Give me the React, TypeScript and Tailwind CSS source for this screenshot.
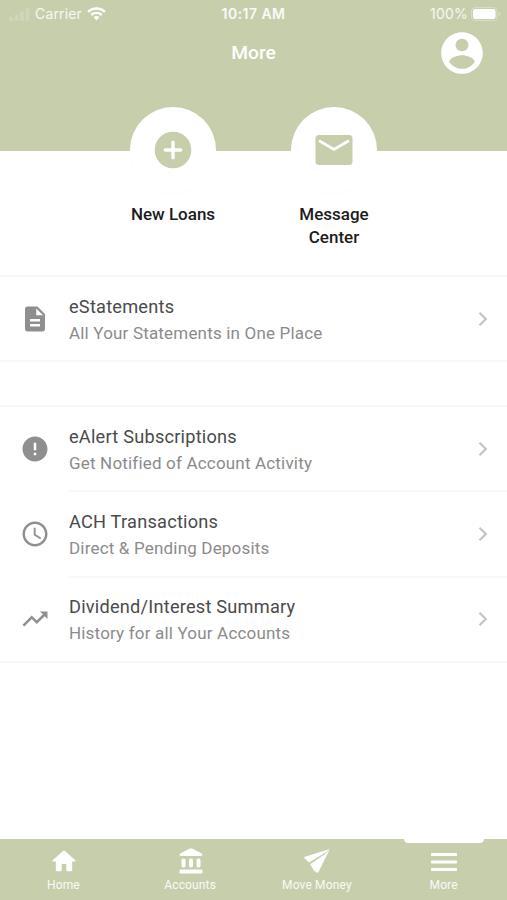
import type { ReactNode } from "react";

type MenuItem = {
  title: string;
  description: string;
  icon: string;
};

type IconProps = {
  path: string;
  className: string;
};

const documentPath =
  "M14 2H6c-1.1 0-1.99.9-1.99 2L4 20c0 1.1.89 2 1.99 2H18c1.1 0 2-.9 2-2V8l-6-6zm2 16H8v-2h8v2zm0-4H8v-2h8v2zm-3-5V3.5L18.5 9H13z";
const alertPath =
  "M12 2C6.48 2 2 6.48 2 12s4.48 10 10 10 10-4.48 10-10S17.52 2 12 2zm1 15h-2v-2h2v2zm0-4h-2V7h2v6z";
const clockPath =
  "M11.99 2C6.47 2 2 6.48 2 12s4.47 10 9.99 10C17.52 22 22 17.52 22 12S17.52 2 11.99 2zM12 20c-4.42 0-8-3.58-8-8s3.58-8 8-8 8 3.58 8 8-3.58 8-8 8zm.5-13H11v6l5.25 3.15.75-1.23-4.5-2.67z";
const trendPath =
  "M16 6l2.29 2.29-4.88 4.88-4-4L2 16.59 3.41 18l6-6 4 4 6.3-6.29L22 12V6z";
const accountPath =
  "M12 2C6.48 2 2 6.48 2 12s4.48 10 10 10 10-4.48 10-10S17.52 2 12 2zm0 3.1c1.66 0 3.1 1.34 3.1 3s-1.44 3-3.1 3-3.1-1.34-3.1-3 1.44-3 3.1-3zm0 14.5c-2.5 0-4.71-1.28-6.1-3.32.03-1.99 4.1-3.18 6.1-3.18 1.99 0 6.07 1.19 6.1 3.18-1.39 2.04-3.6 3.32-6.1 3.32z";
const homePath =
  "M10 20v-5.5h4V20c0 .5.3.8.8.8h3.400c.5 0 .8-.3.8-.8v-7.500h2.200c.8 0 1-.7.500-1.200L12.600 3.300c-.4-.3-.8-.3-1.200 0L2.300 11.300c-.5.5-.3 1.200.5 1.200H5V20c0 .5.3.8.8.8h3.400c.5 0 .8-.3.8-.8z";

const statementItems: MenuItem[] = [
  {
    title: "eStatements",
    description: "All Your Statements in One Place",
    icon: documentPath,
  },
];

const activityItems: MenuItem[] = [
  {
    title: "eAlert Subscriptions",
    description: "Get Notified of Account Activity",
    icon: alertPath,
  },
  {
    title: "ACH Transactions",
    description: "Direct & Pending Deposits",
    icon: clockPath,
  },
  {
    title: "Dividend/Interest Summary",
    description: "History for all Your Accounts",
    icon: trendPath,
  },
];

function Icon({ path, className }: IconProps) {
  return (
    <svg viewBox="0 0 24 24" fill="currentColor" className={className}>
      <path d={path} />
    </svg>
  );
}

function StatusBar() {
  return (
    <div className="grid h-7 grid-cols-3 items-center font-['Inter',sans-serif] text-[14px] leading-none">
      <div className="flex items-center pl-[9px]">
        <svg viewBox="0 0 22 13" className="h-[13px] w-[22px] fill-white/15">
          <rect x="0" y="9" width="4" height="4" rx="1" />
          <rect x="5.5" y="6.5" width="4" height="6.5" rx="1" />
          <rect x="11" y="3.5" width="4" height="9.5" rx="1" />
          <rect x="16.5" y="0" width="4" height="13" rx="1" />
        </svg>
        <span className="ml-1 tracking-[0.15px] text-white/85">Carrier</span>
        <svg viewBox="0 0 20 14" className="ml-[5px] h-[14px] w-[19px] fill-white">
          <path d="M10 0C6.300 0 2.900 1.400.3 3.800l1.700 1.800C4.100 3.600 6.900 2.500 10 2.500s5.900 1.100 8 3.100l1.700-1.800C17.100 1.400 13.700 0 10 0z" />
          <path d="M10 4.700c-2.400 0-4.600.9-6.300 2.500l1.700 1.800C6.600 7.800 8.200 7.100 10 7.100s3.400.7 4.600 1.900l1.700-1.800C14.600 5.600 12.400 4.700 10 4.700z" />
          <path d="M10 9.200c-1.200 0-2.200.4-3 1.200L10 13.800l3-3.400c-.8-.8-1.800-1.200-3-1.200z" />
        </svg>
      </div>
      <span className="text-center font-semibold tracking-[0.45px] text-white/90">10:17 AM</span>
      <div className="flex items-center justify-end pr-[6px]">
        <span className="tracking-[0.2px] text-white/85">100%</span>
        <svg viewBox="0 0 30 14" className="ml-[3px] h-[14px] w-[30px]">
          <rect x=".5" y=".5" width="25.500" height="13" rx="3.500" fill="none" stroke="white" strokeOpacity=".3" />
          <rect x="2" y="2" width="22.500" height="10" rx="2" fill="white" />
          <path d="M27.500 4.800v4.400c1-.3 1.700-1.200 1.700-2.200s-.7-1.900-1.700-2.200z" fill="white" fillOpacity=".35" />
        </svg>
      </div>
    </div>
  );
}

function QuickAction({ label, children }: { label: string; children: ReactNode }) {
  return (
    <div className="flex w-[108px] flex-col items-center">
      <div className="flex size-[86px] items-center justify-center rounded-full bg-white shadow-[0_1px_3px_rgba(0,0,0,0.015)]">
        {children}
      </div>
      <span className="mt-[10px] text-center text-[17px] leading-[22.500px] font-medium text-[#1c1c1c]">
        {label}
      </span>
    </div>
  );
}

function MenuList({ items }: { items: MenuItem[] }) {
  return (
    <ul className="border-y-2 border-[#f8f8f8]">
      {items.map((item, index) => (
        <li key={item.title} className="group flex h-[85.500px] items-center pl-5 first:h-[83px]">
          <Icon path={item.icon} className="mt-[2px] size-[30px] shrink-0 text-[#8f8f8f] group-first:mt-0" />
          <div
            className={
              index > 0
                ? "ml-[19px] flex h-full flex-1 items-center border-t-2 border-[#f8f8f8]"
                : "ml-[19px] flex h-full flex-1 items-center"
            }
          >
            <div className="flex-1 pt-[2px]">
              <p className="text-[18.200px] leading-[26px] tracking-[0.220px] text-[#4a4a4a]">{item.title}</p>
              <p className="text-[17px] leading-[26px] tracking-[0.180px] text-[#8b8b8b]">{item.description}</p>
            </div>
            <svg viewBox="0 0 10 16" className="mr-[19px] h-4 w-[10px]" fill="none" stroke="#c4c4c4" strokeWidth="2.200">
              <path d="M1.500 1.800 7.800 8l-6.300 6.200" />
            </svg>
          </div>
        </li>
      ))}
    </ul>
  );
}

function NavItem({ label, active, children }: { label: string; active?: boolean; children: ReactNode }) {
  return (
    <a className="relative flex flex-1 flex-col items-center pt-[8px]">
      {active && <span className="absolute top-0 h-1 w-[80px] rounded-b bg-white" />}
      <span className="flex h-[28px] items-center justify-center">{children}</span>
      <span className="mt-[2px] text-[12px] leading-4 tracking-[0.15px] text-white/90">{label}</span>
    </a>
  );
}

export default function App() {
  return (
    <div className="flex h-[900px] w-full flex-col bg-white font-['Roboto',sans-serif]">
      <header className="h-[151px] shrink-0 bg-[#c6ceac] text-white">
        <StatusBar />
        <div className="grid h-[50px] grid-cols-[1fr_auto_1fr] items-center">
          <h1 className="col-start-2 text-[19.200px] font-medium">More</h1>
          <Icon path={accountPath} className="-mt-px mr-5 size-[50px] justify-self-end" />
        </div>
      </header>

      <main className="flex-1">
        <section className="-mt-11 flex h-[168px] justify-center gap-[53px]">
          <QuickAction label="New Loans">
            <svg viewBox="0 0 38 38" className="size-[38px]">
              <circle cx="19" cy="19" r="18.300" fill="#c6ceac" />
              <path d="M19 11.200v15.600M11.200 19h15.600" stroke="white" strokeWidth="3.400" strokeLinecap="round" />
            </svg>
          </QuickAction>
          <QuickAction label="Message Center">
            <svg viewBox="0 0 38 30" className="h-[30px] w-[38px]">
              <rect x=".5" width="37" height="30" rx="3.500" fill="#c6ceac" />
              <path d="m5 6.200 14 8.200 14-8.200" fill="none" stroke="white" strokeWidth="2.800" strokeLinecap="round" />
            </svg>
          </QuickAction>
        </section>
        <MenuList items={statementItems} />
        <div className="h-[43px]" />
        <MenuList items={activityItems} />
      </main>

      <nav className="flex h-[61px] shrink-0 bg-[#c6ceac] text-white">
        <NavItem label="Home">
          <Icon path={homePath} className="ml-px size-[28px]" />
        </NavItem>
        <NavItem label="Accounts">
          <svg viewBox="0 0 24 26" className="ml-px h-[26px] w-6 fill-white">
            <path d="M11 .6 1.200 5.400C.2 6 .4 8 1.600 8h20.800c1.200 0 1.400-2 .4-2.600L13 .6c-.7-.3-1.300-.3-2 0z" />
            <rect x="2.500" y="10.500" width="4" height="9" rx="1.800" />
            <rect x="10" y="10.500" width="4" height="9" rx="1.800" />
            <rect x="17.500" y="10.500" width="4" height="9" rx="1.800" />
            <rect x=".5" y="21.500" width="23" height="4" rx="1.300" />
          </svg>
        </NavItem>
        <NavItem label="Move Money">
          <svg viewBox="0 0 26 24" className="ml-px h-6 w-[26px] fill-white">
            <path d="M25.800 0 1 7.800c-.8.300-.9.900-.4 1.400L5 13.400 21.500 3.600z" />
            <path d="M25.800.2 14.500 23c-.4.800-1.200 1-1.900.500L9.800 21.600 6.300 15.200 21.500 4.800z" />
          </svg>
        </NavItem>
        <NavItem label="More" active>
          <svg viewBox="0 0 26 18" className="mt-px h-[18px] w-[26px] fill-white">
            <rect width="26" height="3" rx=".8" />
            <rect y="7.500" width="26" height="3" rx=".8" />
            <rect y="15" width="26" height="3" rx=".8" />
          </svg>
        </NavItem>
      </nav>
    </div>
  );
}
